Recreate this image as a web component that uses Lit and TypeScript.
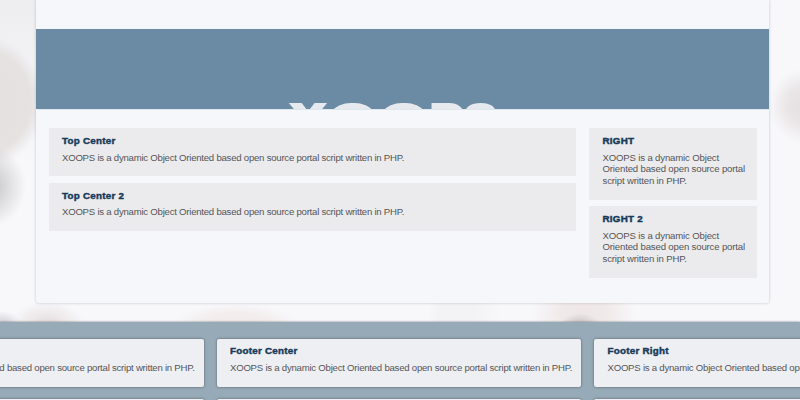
import { LitElement, html, css } from "lit";
import { customElement, property } from "lit/decorators.js";

const COPY =
  "XOOPS is a dynamic Object Oriented based open source portal script written in PHP.";

@customElement("info-block")
class InfoBlock extends LitElement {
  @property() heading = "";
  static styles = css`
    :host {
      display: block;
      box-sizing: border-box;
      padding: 7px 8px 0 13.5px;
      background: #ebebed;
      color: #555557;
      border-radius: 1px;
      font: 9.6px/11.5px "Liberation Sans", Arial, sans-serif;
      letter-spacing: -0.235px;
    }
    h3 {
      margin: 0 0 5.5px;
      color: #173a5a;
      font: bold 9.8px/11px "Liberation Sans", Arial, sans-serif;
      letter-spacing: 0.25px;
      -webkit-text-stroke: 0.45px #173a5a;
      white-space: nowrap;
    }
    p {
      margin: 0;
    }
  `;
  render() {
    return html`<h3>${this.heading}</h3><p>${COPY}</p>`;
  }
}

@customElement("app-root")
class AppRoot extends LitElement {
  static styles = css`
    :host {
      display: flex;
      flex-direction: column;
      height: 400px;
      overflow: hidden;
      background:
        radial-gradient(ellipse 40px 42px at -14px 186px, #bcbcbe 0, rgba(205, 205, 208, 0.75) 45%, rgba(240, 240, 242, 0) 100%),
        radial-gradient(circle 68px at -22px 102px, #e3e0e0 0, #e6e2e2 78%, rgba(235, 232, 233, 0) 100%),
        radial-gradient(ellipse 38px 38px at 806px 106px, #e6dfe0 0, #e9e4e5 45%, rgba(240, 236, 238, 0) 100%),
        radial-gradient(ellipse 38px 24px at 47px 325px, #e3dadb 0, rgba(234, 227, 228, 0.7) 50%, rgba(248, 246, 248, 0) 100%),
        radial-gradient(ellipse 20px 14px at 2px 325px, #cccbd0 0, rgba(235, 235, 240, 0) 100%),
        radial-gradient(ellipse 62px 20px at 236px 323px, #f2ebea 0, #f3eded 50%, rgba(248, 246, 248, 0) 100%),
        radial-gradient(ellipse 20px 12px at 580px 325px, #c6c1c5 0, rgba(225, 220, 224, 0) 100%),
        radial-gradient(ellipse 54px 28px at 584px 313px, #efe7e7 0, #f1eaea 45%, rgba(248, 246, 248, 0) 100%),
        linear-gradient(90deg, rgba(242, 242, 245, 0) 428px, #f3f3f6 440px, #f3f3f6 475px, rgba(242, 242, 245, 0) 500px) 0 300px / 100% 22px no-repeat,
        linear-gradient(#ededf0 0, #f3f3f6 70px, #f8f8fb 170px) 0 0 / 36px 322px no-repeat,
        #f8f8fb;
    }
    .page {
      flex: none;
      box-sizing: border-box;
      width: 733.5px;
      height: 303px;
      margin: 0 0 18.5px 35.5px;
      background: #f5f7fa;
      border-radius: 0 0 3px 3px;
      box-shadow: 0 0 3px rgba(80, 80, 80, 0.32);
      padding-top: 29px;
    }
    .banner {
      height: 80px;
      background: #6b8ba5;
      box-shadow: 0 0 1px 0.5px #dce8ee;
      overflow: hidden;
    }
    .banner svg {
      display: block;
      width: 734px;
      height: 80px;
    }
    .logo {
      font: 900 44px Inter, sans-serif;
      fill: #e6e9ee;
    }
    .columns {
      display: grid;
      grid-template-columns: 527.5px 168px;
      column-gap: 12.5px;
      padding: 19px 13px 0;
    }
    .stack {
      display: flex;
      flex-direction: column;
      gap: 6.5px;
    }
    .main info-block {
      height: 48.3px;
    }
    .side info-block {
      height: 71.7px;
      padding-left: 14px;
      letter-spacing: -0.16px;
    }
    .footer {
      flex: 1;
      background: #97aab7;
      box-shadow: 0 0 2px rgba(60, 70, 80, 0.7);
      padding-top: 17px;
    }
    .row {
      display: grid;
      grid-template-columns: repeat(3, 364.5px);
      gap: 13px;
      margin-left: -161px;
      margin-bottom: 12px;
    }
    .row info-block {
      height: 48.5px;
      padding-top: 6.5px;
      background: #eeeff3;
      border-radius: 2px;
      box-shadow: 0 0 2.5px rgba(50, 50, 50, 0.7);
      white-space: nowrap;
    }
  `;

  render() {
    const footer = ["Footer Left", "Footer Center", "Footer Right"];
    return html`
      <div class="page">
        <div class="banner">
          <svg viewBox="0 0 734 80">
            <g class="logo">
              <text transform="translate(250 106) scale(1.27 1)">X</text>
              <text transform="translate(291.5 106) scale(1.48 1)">O</text>
              <text transform="translate(342.5 106) scale(1.48 1)">O</text>
              <text transform="translate(393 106) scale(1.25 1)">P</text>
              <text transform="translate(426.5 106) scale(1.22 1)">S</text>
            </g>
          </svg>
        </div>
        <div class="columns">
          <div class="stack main">
            <info-block heading="Top Center"></info-block>
            <info-block heading="Top Center 2"></info-block>
          </div>
          <div class="stack side">
            <info-block heading="RIGHT"></info-block>
            <info-block heading="RIGHT 2"></info-block>
          </div>
        </div>
      </div>
      <div class="footer">
        <div class="row">${footer.map((t) => html`<info-block heading=${t}></info-block>`)}</div>
        <div class="row">${footer.map((t) => html`<info-block heading=${t}></info-block>`)}</div>
      </div>
    `;
  }
}
